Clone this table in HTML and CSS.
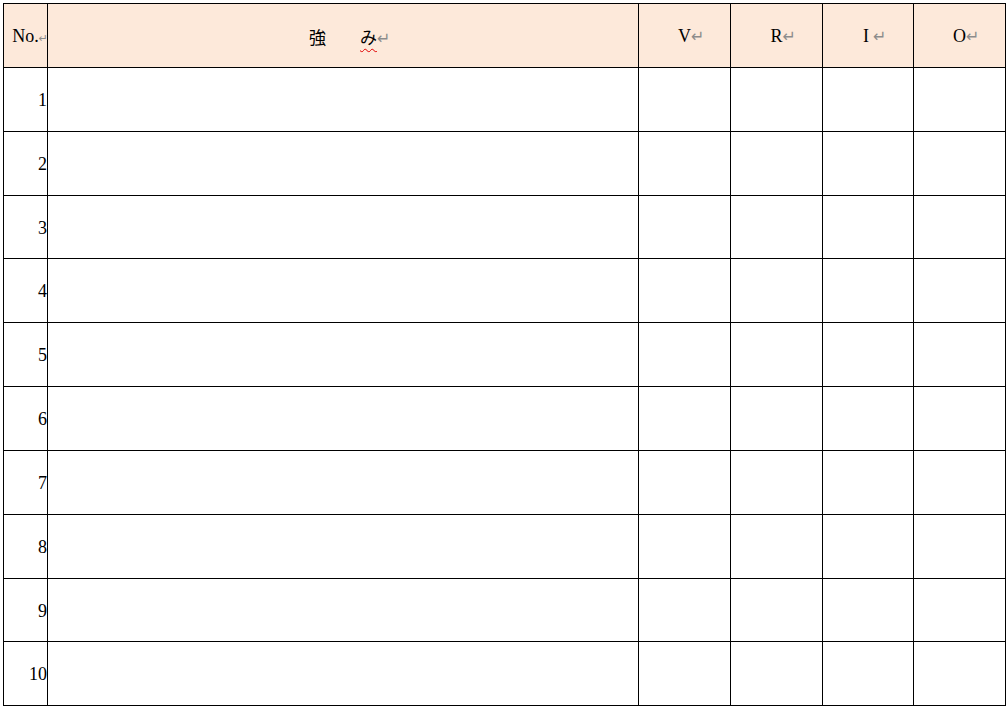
FILE: index.html
```html
<!DOCTYPE html>
<html lang="ja">
<head>
  <meta charset="UTF-8" />
  <title>強み VRIO</title>
  <link rel="stylesheet" href="styles.css">
</head>
<body>
  <table class="vrio">
    <colgroup>
      <col class="c-no" />
      <col class="c-main" />
      <col class="c-v" />
      <col class="c-r" />
      <col class="c-i" />
      <col class="c-o" />
    </colgroup>
    <thead>
      <tr>
        <th class="no">No.<span class="mark">↵</span></th>
        <th><span class="kan">強</span><span class="kan wavy">み</span><span class="mark">↵</span></th>
        <th>V<span class="mark">↵</span></th>
        <th>R<span class="mark">↵</span></th>
        <th>I<span class="mark gap">↵</span></th>
        <th>O<span class="mark">↵</span></th>
      </tr>
    </thead>
    <tbody>
      <tr><td class="num">1</td><td></td><td></td><td></td><td></td><td></td></tr>
      <tr><td class="num">2</td><td></td><td></td><td></td><td></td><td></td></tr>
      <tr class="short"><td class="num">3</td><td></td><td></td><td></td><td></td><td></td></tr>
      <tr><td class="num">4</td><td></td><td></td><td></td><td></td><td></td></tr>
      <tr><td class="num">5</td><td></td><td></td><td></td><td></td><td></td></tr>
      <tr><td class="num">6</td><td></td><td></td><td></td><td></td><td></td></tr>
      <tr><td class="num">7</td><td></td><td></td><td></td><td></td><td></td></tr>
      <tr><td class="num">8</td><td></td><td></td><td></td><td></td><td></td></tr>
      <tr class="short"><td class="num">9</td><td></td><td></td><td></td><td></td><td></td></tr>
      <tr><td class="num">10</td><td></td><td></td><td></td><td></td><td></td></tr>
    </tbody>
  </table>
</body>
</html>
```

FILE: styles.css
```css
:root {
  --line: #000000;
  --head: #fde9da;
  --mark: #8c8c8c;
  --text: #000000;
}

body {
  margin: 0;
  background: #ffffff;
  font-family: 'Liberation Serif', 'Noto Sans CJK JP', serif;
  font-size: 18px;
  color: var(--text);
}

.vrio {
  margin: 3px 0 0 3px;
  border-collapse: collapse;
  table-layout: fixed;
  width: 1003px;
}

.c-no { width: 44px; }
.c-main { width: 591px; }
.c-v { width: 92px; }
.c-r { width: 92px; }
.c-i { width: 91px; }
.c-o { width: 92px; }

th, td {
  border: 1px solid var(--line);
  padding: 0;
  height: 63px;
  overflow: hidden;
  white-space: nowrap;
}

th {
  background: var(--head);
  font-weight: normal;
  text-align: center;
  vertical-align: middle;
  height: 62px;
  padding-top: 1px;
}

/* the cell-end mark after No. is narrower so it stays inside the cell */
.no .mark {
  font-size: 11px;
}

.num {
  text-align: right;
  vertical-align: middle;
  height: 61px;
  padding: 2px 0 0 0;
}

.short td {
  height: 60px;
}

.kan {
  font-family: 'Noto Sans CJK JP', sans-serif;
  font-size: 17px;
}

.kan + .kan {
  margin-left: 34px;
}

.wavy {
  text-decoration: underline wavy #e00000;
  text-decoration-thickness: 1px;
  text-underline-offset: 4px;
}

.mark {
  display: inline-block;
  width: 0;
  font-family: 'DejaVu Sans', sans-serif;
  font-size: 16px;
  color: var(--mark);
  vertical-align: 0;
}

.mark.gap {
  margin-left: 4px;
}
```
